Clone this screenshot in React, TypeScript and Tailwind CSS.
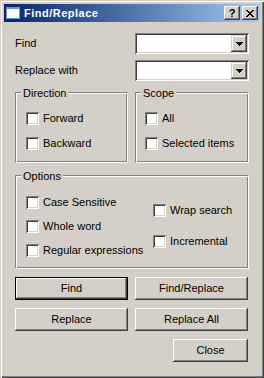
import React from "react";

function Check({ label }: { label: string }) {
  return (
    <div className="flex h-[13px] items-center gap-[4px]">
      <span className="h-[13px] w-[13px] shrink-0 bg-white shadow-[inset_1px_1px_#808080,inset_-1px_-1px_#fff,inset_2px_2px_#404040,inset_-2px_-2px_#d4d0c8]" />
      <span className="whitespace-nowrap leading-[13px]">{label}</span>
    </div>
  );
}

function Combo() {
  return (
    <div className="flex h-[21px] justify-end bg-white p-[2px] shadow-[inset_1px_1px_#808080,inset_-1px_-1px_#fff,inset_2px_2px_#404040,inset_-2px_-2px_#d4d0c8]">
      <div className="flex h-full w-[16px] items-center justify-center bg-[#d4d0c8] shadow-[inset_-1px_-1px_#404040,inset_1px_1px_#d4d0c8,inset_-2px_-2px_#808080,inset_2px_2px_#fff]">
        <svg width="7" height="4" viewBox="0 0 7 4" shapeRendering="crispEdges">
          <path d="M0 0h7v1H0zM1 1h5v1H1zM2 2h3v1H2zM3 3h1v1H3z" fill="#000" />
        </svg>
      </div>
    </div>
  );
}

function Btn({ label, def, className = "" }: { label: string; def?: boolean; className?: string }) {
  if (def) {
    return (
      <div className={`h-[23px] border border-black ${className}`}>
        <div className="flex h-full items-center justify-center shadow-[inset_-1px_-1px_#404040,inset_1px_1px_#fff,inset_-2px_-2px_#808080,inset_2px_2px_#d4d0c8]">
          {label}
        </div>
      </div>
    );
  }
  return (
    <div
      className={`flex h-[23px] items-center justify-center shadow-[inset_-1px_-1px_#404040,inset_1px_1px_#fff,inset_-2px_-2px_#808080,inset_2px_2px_#d4d0c8] ${className}`}
    >
      {label}
    </div>
  );
}

function Legend({ text }: { text: string }) {
  return <span className="-mt-[6px] ml-[5px] w-fit bg-[#d4d0c8] px-[2px] leading-[13px]">{text}</span>;
}

const groupCls =
  "flex flex-col border border-t-[#808080] border-l-[#808080] border-b-white border-r-white shadow-[inset_1px_1px_#fff,inset_-1px_-1px_#808080]";

export default function App() {
  return (
    <div className="flex h-[378px] w-[264px] flex-col bg-[#d4d0c8] p-[4px] font-['Liberation_Sans',Arial,sans-serif] text-[11px] text-black shadow-[inset_1px_1px_#d4d0c8,inset_2px_2px_#fff,inset_-1px_-1px_#404040,inset_-2px_-2px_#808080]">
      {/* title bar */}
      <div className="flex h-[18px] shrink-0 items-center gap-[4px] bg-gradient-to-r from-[#0a246a] to-[#a6caf0] pl-[2px] pr-[2px]">
        <svg width="14" height="12" viewBox="0 0 14 12" shapeRendering="crispEdges">
          <rect x="0" y="0" width="14" height="12" fill="#fff" />
          <rect x="0" y="0" width="14" height="2" fill="#6f93d8" />
          <rect x="0.5" y="0.5" width="13" height="11" fill="none" stroke="#6f93d8" />
        </svg>
        <span className="text-[11px] font-bold tracking-[0.5px] text-white">Find/Replace</span>
        <div className="flex-1" />
        <div className="flex gap-[2px]">
          <div className="flex h-[14px] w-[16px] items-center justify-center bg-[#d4d0c8] shadow-[inset_-1px_-1px_#404040,inset_1px_1px_#fff,inset_-2px_-2px_#808080,inset_2px_2px_#d4d0c8]">
            <span className="text-[11px] font-bold leading-[11px]">?</span>
          </div>
          <div className="flex h-[14px] w-[16px] items-center justify-center bg-[#d4d0c8] shadow-[inset_-1px_-1px_#404040,inset_1px_1px_#fff,inset_-2px_-2px_#808080,inset_2px_2px_#d4d0c8]">
            <svg width="8" height="7" viewBox="0 0 8 7" shapeRendering="crispEdges">
              <path
                d="M0 0h2v1H0zM6 0h2v1H6zM1 1h2v1H1zM5 1h2v1H5zM2 2h4v1H2zM3 3h2v1H3zM2 4h4v1H2zM1 5h2v1H1zM5 5h2v1H5zM0 6h2v1H0zM6 6h2v1H6z"
                fill="#000"
              />
            </svg>
          </div>
        </div>
      </div>

      {/* client */}
      <div className="flex flex-col px-[11px] pt-[11px]">
        <div className="grid grid-cols-[113px_114px] items-center gap-x-[7px] gap-y-[6px]">
          <span>Find</span>
          <Combo />
          <span>Replace with</span>
          <Combo />
        </div>

        <div className="mt-[11px] grid grid-cols-[113px_114px] gap-x-[7px]">
          <div className={`h-[71px] ${groupCls}`}>
            <Legend text="Direction" />
            <div className="mt-[12px] pl-[10px]">
              <Check label="Forward" />
            </div>
            <div className="mt-[12px] pl-[10px]">
              <Check label="Backward" />
            </div>
          </div>
          <div className={`h-[71px] ${groupCls}`}>
            <Legend text="Scope" />
            <div className="mt-[12px] pl-[9px]">
              <Check label="All" />
            </div>
            <div className="mt-[12px] pl-[9px]">
              <Check label="Selected items" />
            </div>
          </div>
        </div>

        <div className={`mt-[12px] h-[94px] ${groupCls}`}>
          <Legend text="Options" />
          <div className="mt-[13px] flex">
            <div className="flex w-[137px] flex-col pl-[10px]">
              <Check label="Case Sensitive" />
              <div className="mt-[11px]">
                <Check label="Whole word" />
              </div>
              <div className="mt-[11px]">
                <Check label="Regular expressions" />
              </div>
            </div>
            <div className="flex flex-col gap-[18px] pt-[8px]">
              <Check label="Wrap search" />
              <Check label="Incremental" />
            </div>
          </div>
        </div>

        <div className="mt-[8px] grid grid-cols-[113px_114px] gap-x-[7px] gap-y-[8px]">
          <Btn label="Find" def />
          <Btn label="Find/Replace" className="w-[113px]" />
          <Btn label="Replace" />
          <Btn label="Replace All" className="w-[113px]" />
          <div />
          <Btn label="Close" className="ml-[38px] w-[75px]" />
        </div>
      </div>
    </div>
  );
}
